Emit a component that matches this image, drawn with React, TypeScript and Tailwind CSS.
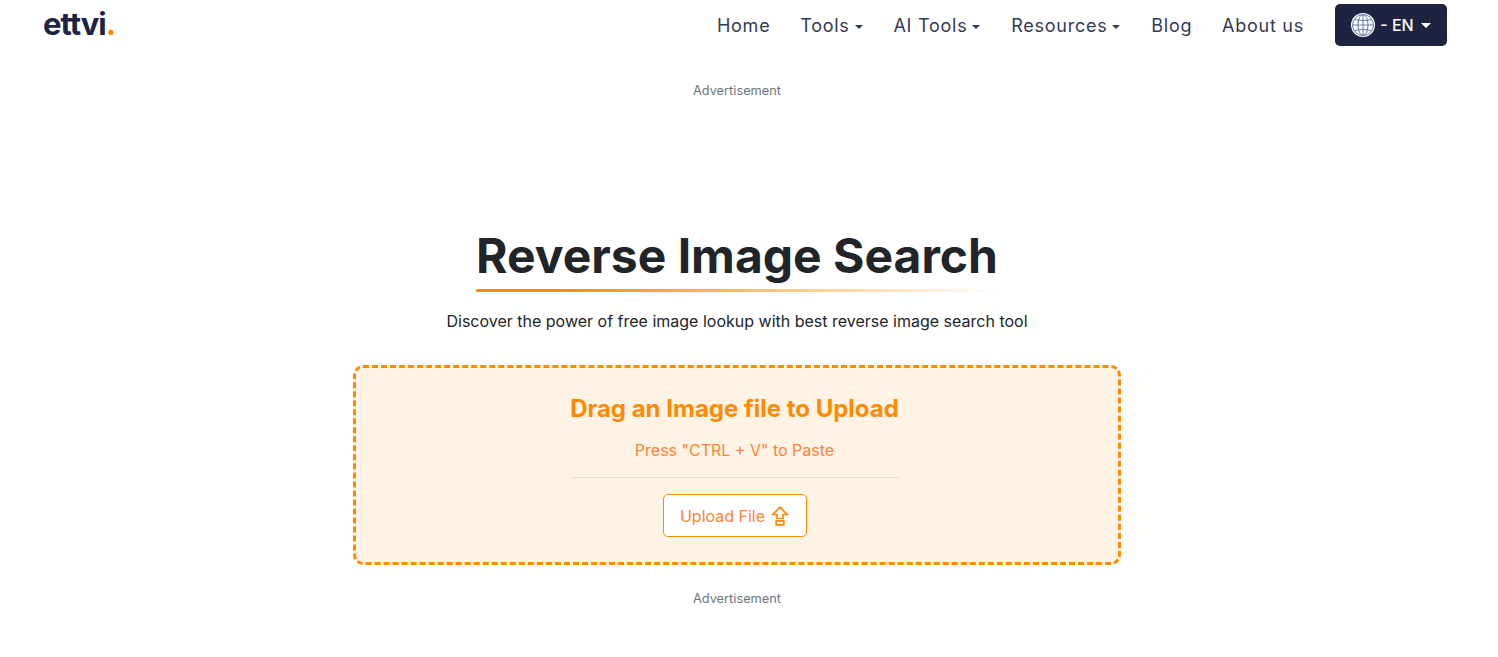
import React from 'react';

const Caret = () => (
  <span className="ml-[5px] mr-[1px] inline-block border-x-[4px] border-t-[4px] border-x-transparent border-t-current align-[3px]" />
);

const Globe = () => (
  <svg viewBox="0 0 24 24" className="h-[24px] w-[24px]">
    <circle cx="12" cy="12" r="12" fill="#ffffff" />
    <g fill="none" stroke="#6a7aa5" strokeWidth="1">
      <circle cx="12" cy="12" r="10.5" />
      <ellipse cx="12" cy="12" rx="5" ry="10.5" />
      <path d="M12 1.5v21M1.5 12h21M3.2 6.5Q12 9 20.8 6.5M3.2 17.5Q12 15 20.8 17.5" />
    </g>
  </svg>
);

const UploadIcon = () => (
  <svg viewBox="0 0 18 20" className="h-[20px] w-[18px]" fill="none" stroke="#ff8a00" strokeWidth="1.7">
    <path d="M9 1.2 1.8 8.5h4.2v4h6v-4h4.2z" />
    <path d="M5.2 14.8h7.6v4h-7.6z" />
  </svg>
);

const navItems = [
  { label: 'Home' },
  { label: 'Tools', caret: true },
  { label: 'AI Tools', caret: true },
  { label: 'Resources', caret: true },
  { label: 'Blog' },
  { label: 'About us' },
];

const App: React.FC = () => {
  return (
    <div className="h-[657px] overflow-hidden bg-white font-['Inter',sans-serif] text-[#212529]">
      <nav className="flex h-[50px] items-center justify-between pl-[43px] pr-[51px]">
        <div className="-mt-[3px] text-[31px] font-bold leading-none tracking-[-1px] text-[#1d2340]">
          ettvi<span className="text-[#ff8a00]">.</span>
        </div>
        <div className="flex items-center">
          <ul className="flex items-center gap-[29.8px] text-[18px] tracking-[0.75px] text-[#343a55]">
            {navItems.map((item) => (
              <li key={item.label} className="whitespace-nowrap">
                {item.label}
                {item.caret && <Caret />}
              </li>
            ))}
          </ul>
          <button className="ml-[31px] flex h-[42px] w-[112px] items-center justify-center rounded-[5px] bg-[#1d2340] text-[16px] font-medium text-white">
            <Globe />
            <span className="ml-[5px]">- EN</span>
            <span className="ml-[7px] inline-block border-x-[5px] border-t-[5px] border-x-transparent border-t-white" />
          </button>
        </div>
      </nav>

      <main className="flex flex-col items-center">
        <p className="mt-[33px] ml-[-24px] text-[12.8px] leading-4 text-[#6c757d]">Advertisement</p>

        <div className="mt-[128px] ml-[-24px] flex flex-col items-center">
          <h1 className="text-[48px] font-bold leading-[58px]">Reverse Image Search</h1>
          <div className="mt-[4px] h-[3px] w-[522px] rounded-full bg-linear-to-r/srgb from-[#ff8a00] from-15% to-white" />
          <p className="mt-[17px] text-[16px] leading-6">
            Discover the power of free image lookup with best reverse image search tool
          </p>
        </div>

        <section className="mt-[32px] ml-[-24px] flex h-[200px] w-[768px] flex-col items-center rounded-[10px] border-[3px] border-dashed border-[#ff8a00] bg-[#fff3e6] pr-[5px]">
          <h2 className="mt-[25px] text-[24px] font-bold leading-[32px] text-[#ff8a00]">Drag an Image file to Upload</h2>
          <p className="mt-[13px] text-[16px] leading-6 text-[#ff8433]">Press "CTRL + V" to Paste</p>
          <div className="mt-[15px] h-px w-[328px] bg-[#e8dccf]" />
          <button className="mt-[16px] flex h-[43px] w-[144px] items-center justify-center gap-[6px] rounded-[5px] border border-[#ff8a00] bg-white text-[16px] text-[#ff8433]">
            Upload File
            <UploadIcon />
          </button>
        </section>

        <p className="mt-[26px] ml-[-24px] text-[12.8px] leading-4 text-[#6c757d]">Advertisement</p>
      </main>
    </div>
  );
};

export default App;
